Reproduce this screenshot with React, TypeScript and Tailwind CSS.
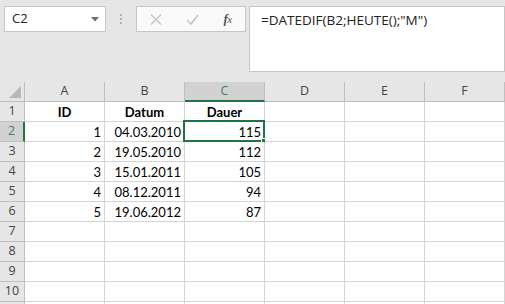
const cols = ['A', 'B', 'C', 'D', 'E', 'F']

type Row = { n: number; cells: string[]; bold?: boolean; hideLabel?: boolean }

const rows: Row[] = [
  { n: 1, cells: ['ID', 'Datum', 'Dauer', '', '', ''], bold: true },
  { n: 2, cells: ['1', '04.03.2010', '115', '', '', ''] },
  { n: 3, cells: ['2', '19.05.2010', '112', '', '', ''] },
  { n: 4, cells: ['3', '15.01.2011', '105', '', '', ''] },
  { n: 5, cells: ['4', '08.12.2011', '94', '', '', ''] },
  { n: 6, cells: ['5', '19.06.2012', '87', '', '', ''] },
  { n: 7, cells: ['', '', '', '', '', ''] },
  { n: 8, cells: ['', '', '', '', '', ''] },
  { n: 9, cells: ['', '', '', '', '', ''] },
  { n: 10, cells: ['', '', '', '', '', ''] },
  // only the top edge of row 11 is visible
  { n: 11, cells: ['', '', '', '', '', ''], hideLabel: true },
]

const uiFont = { fontFamily: '"Open Sans", "Noto Sans", sans-serif' }
const cellFont = { fontFamily: 'Lato, "Open Sans", sans-serif' }

function Toolbar() {
  return (
    <div className="flex items-start pt-[6px] pl-[4px] h-[82px]">
      {/* name box */}
      <div className="relative w-[102px] h-[26px] bg-white border border-[#c6c6c6] flex items-center pl-[7px] text-[13px] text-[#222]" style={uiFont}>
        C2
        <svg className="absolute right-[6px] top-[10px]" width="8" height="5" viewBox="0 0 8 5">
          <path d="M0 0h8L4 4.5z" fill="#6f6f6f" />
        </svg>
      </div>
      {/* grip */}
      <div className="w-[30px] h-[26px] flex flex-col items-center justify-center gap-[2px]">
        <div className="w-[2px] h-[2px] bg-[#b3b3b3]" />
        <div className="w-[2px] h-[2px] bg-[#b3b3b3]" />
        <div className="w-[2px] h-[2px] bg-[#b3b3b3]" />
      </div>
      {/* cancel / enter / fx */}
      <div className="w-[110px] h-[26px] bg-[#fafafa] border border-[#c6c6c6] flex items-center">
        <div className="w-[37px] flex justify-center">
          <svg width="12" height="11" viewBox="0 0 12 11">
            <path d="M1 0.5l10 10M11 0.5l-10 10" stroke="#c4c4c4" strokeWidth="1.3" />
          </svg>
        </div>
        <div className="w-[36px] flex justify-center">
          <svg width="13" height="11" viewBox="0 0 13 11">
            <path d="M1 6l4 4L12 1" stroke="#c4c4c4" strokeWidth="1.6" fill="none" />
          </svg>
        </div>
        <div className="w-[35px] flex justify-center text-[13px] italic text-[#555] tracking-[-0.5px]" style={{ fontFamily: '"Liberation Serif", serif' }}>
          <span className="font-bold">f</span>
          <span className="text-[11px] mt-[2px]">x</span>
        </div>
      </div>
      {/* formula bar */}
      <div className="ml-[3px] w-[256px] h-[66px] bg-white border border-[#c6c6c6] pl-[11px] pt-[3px] text-[13.5px] leading-[20px] text-[#222]" style={uiFont}>
        =DATEDIF(B2;HEUTE();"M")
      </div>
    </div>
  )
}

function HeaderRow() {
  return (
    <div className="flex h-[20px]">
      <div className="relative w-[25px] shrink-0 border-r border-b border-[#bfbfbf] bg-[#e6e6e6]">
        <svg className="absolute left-[9px] top-[4px]" width="12" height="12" viewBox="0 0 12 12">
          <path d="M12 0V12H0z" fill="#b7b7b7" />
        </svg>
      </div>
      {cols.map((c) => {
        const sel = c === 'C'
        return (
          <div
            key={c}
            className={
              sel
                ? 'w-[80px] shrink-0 flex items-center justify-center border-r border-[#bfbfbf] border-b-2 border-b-[#217346] bg-[#d2d2d2] text-[#4a7a5a] text-[12.5px]'
                : 'w-[80px] shrink-0 flex items-center justify-center border-r border-b border-[#bfbfbf] bg-[#e6e6e6] text-[#444] text-[12.5px]'
            }
            style={uiFont}
          >
            {c}
          </div>
        )
      })}
      <div className="flex-1 border-b border-l border-[#bfbfbf] bg-[#e6e6e6]" />
    </div>
  )
}

function DataRow({ row }: { row: Row }) {
  const selRow = row.n === 2
  return (
    <div className="flex h-[20px]">
      <div
        className={
          selRow
            ? 'w-[25px] shrink-0 flex items-center justify-center border-b border-[#bfbfbf] border-r-2 border-r-[#217346] bg-[#d2d2d2] text-[#4a7a5a] text-[12.5px]'
            : 'w-[25px] shrink-0 flex items-center justify-center border-r border-b border-[#bfbfbf] bg-[#e6e6e6] text-[#444] text-[12.5px]'
        }
        style={uiFont}
      >
        {row.hideLabel ? '' : row.n}
      </div>
      {row.cells.map((v, i) => {
        const active = selRow && i === 2
        return (
          <div
            key={i}
            className={
              'relative w-[80px] shrink-0 border-r border-b border-[#d4d4d4] bg-white px-[3px] leading-[20px] text-[13px] text-black ' +
              (row.bold ? 'font-bold text-center' : 'text-right')
            }
            style={cellFont}
          >
            {v}
            {active && (
              <>
                <div className="absolute -left-[2px] -top-[2px] w-[82px] h-[22px] border-2 border-[#217346]" />
                <div className="absolute -right-[3px] -bottom-[3px] w-[6px] h-[6px] bg-[#217346] border border-white" />
              </>
            )}
          </div>
        )
      })}
      <div className="flex-1 border-b border-l border-[#d4d4d4] bg-white" />
    </div>
  )
}

export default function App() {
  return (
    <div className="w-[505px] h-[304px] overflow-hidden bg-[#e6e6e6]">
      <Toolbar />
      <HeaderRow />
      {rows.map((r) => (
        <DataRow key={r.n} row={r} />
      ))}
    </div>
  )
}
